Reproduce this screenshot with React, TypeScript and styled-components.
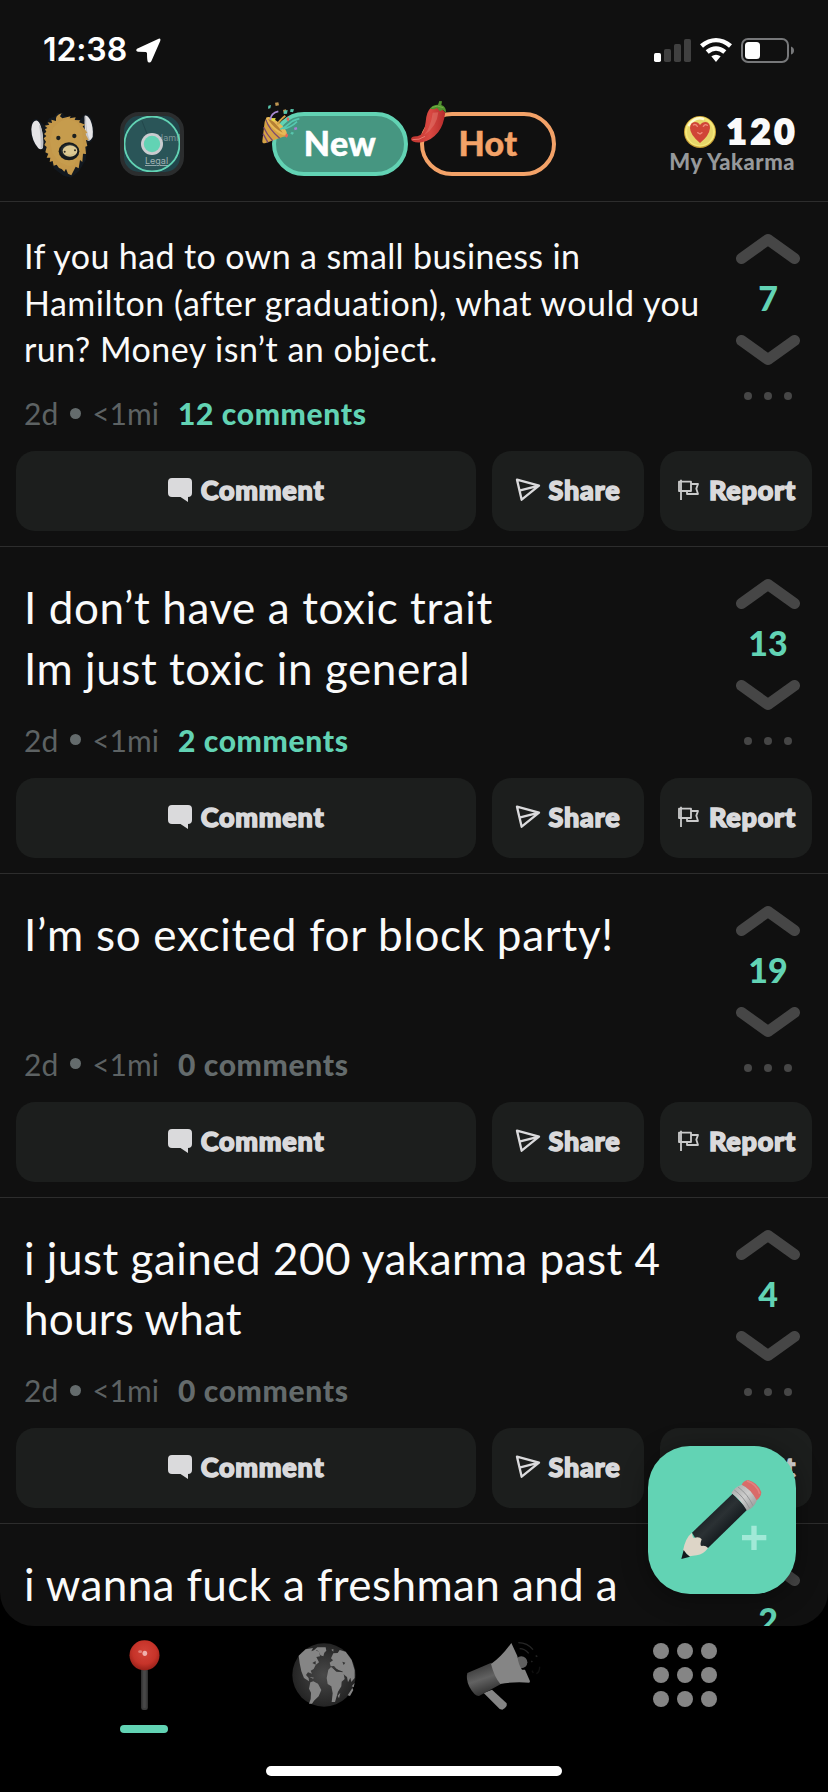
import React from "react";
import styled, { createGlobalStyle } from "styled-components";

const mint = "#62d3b4";
const ink = "#101010";

const GlobalStyle = createGlobalStyle`
  * { box-sizing: border-box; }
  body { margin: 0; background: #000; }
  svg { display: block; flex: none; overflow: visible; }
  button { font: inherit; border: 0; padding: 0; margin: 0; }
`;

const Screen = styled.div`
  width: 828px;
  height: 1792px;
  display: flex;
  flex-direction: column;
  overflow: hidden;
  background: #000;
  color: #fafafa;
  font-family: Lato, "Liberation Sans", sans-serif;
`;

const Page = styled.main`
  height: 1626px;
  flex: none;
  display: flex;
  flex-direction: column;
  overflow: hidden;
  background: ${ink};
  border-radius: 0 0 34px 34px;
  position: relative;
`;

const StatusBar = styled.div`
  height: 100px;
  flex: none;
  display: flex;
  justify-content: space-between;
  align-items: center;
  padding: 0 34px 0 43px;
`;

const StatusGroup = styled.div<{ $gap: number }>`
  display: flex;
  align-items: center;
  gap: ${(p) => p.$gap}px;
`;

const Clock = styled.span`
  font: 600 32px/40px Inter, sans-serif;
  letter-spacing: -0.1px;
  color: #fff;
`;

const Header = styled.header`
  height: 101px;
  flex: none;
  display: flex;
  align-items: flex-start;
  padding: 12px 33px 0 29px;
`;

const MapTile = styled.div`
  width: 64px;
  height: 64px;
  margin-left: 24px;
  border: 4px solid #2b2d2e;
  border-radius: 19px;
  overflow: hidden;
  background: #21454b;
`;

const Tabs = styled.nav`
  display: flex;
  gap: 12px;
  margin-left: 88px;
`;

const Tab = styled.button<{ $color: string; $fill: string; $text: string }>`
  position: relative;
  width: 136px;
  height: 64px;
  padding-bottom: 2px;
  border: 4px solid ${(p) => p.$color};
  border-radius: 32px;
  background: ${(p) => p.$fill};
  color: ${(p) => p.$text};
  font-size: 34px;
  font-weight: 900;
  line-height: 54px;
  letter-spacing: 0.4px;
  text-align: center;
  -webkit-text-stroke: 0.5px ${(p) => p.$text};
`;

const TabBadge = styled.span<{ $x: number; $y: number }>`
  position: absolute;
  left: ${(p) => p.$x}px;
  top: ${(p) => p.$y}px;
`;

const Karma = styled.div`
  margin-left: auto;
  display: flex;
  flex-direction: column;
  align-items: flex-end;
`;

const KarmaScore = styled.div`
  display: flex;
  align-items: center;
  gap: 11px;
  height: 40px;
  font-size: 34px;
  font-weight: 900;
  line-height: 38px;
  letter-spacing: 4.2px;
  -webkit-text-stroke: 2.2px #fafafa;
  span { margin-right: -3.5px; padding-bottom: 2px; }
`;

const KarmaLabel = styled.div`
  font-size: 22px;
  font-weight: 900;
  line-height: 20px;
  letter-spacing: 0.5px;
  color: #96999b;
`;

const PostBox = styled.article`
  flex: none;
  border-top: 1px solid #2d2d2d;
  padding-bottom: 15px;
`;

const PostBody = styled.div`
  display: flex;
  justify-content: space-between;
  min-height: 228px;
`;

const PostContent = styled.div<{ $small?: boolean }>`
  display: flex;
  flex-direction: column;
  justify-content: space-between;
  gap: ${(p) => (p.$small ? 22.5 : 23.5)}px;
  padding: ${(p) => (p.$small ? 31 : 30)}px 0 20px 24px;
`;

const PostText = styled.div<{ $small?: boolean }>`
  font-size: ${(p) => (p.$small ? 34 : 44)}px;
  line-height: ${(p) => (p.$small ? 46.5 : 60.5)}px;
  white-space: nowrap;
`;

const Line = styled.div<{ $track: number }>`
  letter-spacing: ${(p) => p.$track}px;
`;

const Meta = styled.div`
  display: flex;
  align-items: center;
  height: 36px;
  font-size: 30px;
  line-height: 36px;
  color: #5d6263;
  white-space: nowrap;
`;

const Dot = styled.i`
  width: 11px;
  height: 11px;
  margin: 0 11px 0 12px;
  border-radius: 50%;
  background: #646b6c;
`;

const CommentCount = styled.b<{ $active: boolean }>`
  margin-left: 19px;
  font-weight: 900;
  letter-spacing: 0.65px;
  color: ${(p) => (p.$active ? mint : "#646b6c")};
`;

const Votes = styled.div`
  width: 120px;
  flex: none;
  display: flex;
  flex-direction: column;
  align-items: center;
  padding-top: 32px;
`;

const VoteCount = styled.div`
  height: 71px;
  font-size: 34px;
  font-weight: 900;
  line-height: 67px;
  color: ${mint};
`;

const More = styled.div`
  display: flex;
  gap: 12px;
  margin-top: 27px;
  i { width: 8px; height: 8px; border-radius: 50%; background: #464646; }
`;

const Actions = styled.div`
  display: grid;
  grid-template-columns: 460px 152px 152px;
  gap: 16px;
  padding: 0 16px;
`;

const ActionButton = styled.button<{ $gap?: number; $shift?: number }>`
  height: 80px;
  display: flex;
  align-items: center;
  justify-content: center;
  gap: ${(p) => p.$gap ?? 9}px;
  padding-left: ${(p) => p.$shift ?? 0}px;
  padding-bottom: 2px;
  border-radius: 19px;
  background: #1c1e1d;
  color: #dadadc;
  font-size: 27px;
  font-weight: 900;
  line-height: 78px;
  letter-spacing: 0.75px;
  -webkit-text-stroke: 1.5px #dadadc;
`;

const Compose = styled.button`
  position: absolute;
  left: 648px;
  top: 1446px;
  width: 148px;
  height: 148px;
  border-radius: 42px;
  background: ${mint};
  box-shadow: 0 4px 26px rgba(0, 0, 0, 0.4);
  display: grid;
  place-items: center;
`;

const BottomNav = styled.nav`
  display: grid;
  grid-template-columns: repeat(4, 180px);
  padding: 14px 54px 0;
  height: 140px;
  flex: none;
`;

const NavItem = styled.div`
  display: flex;
  flex-direction: column;
  align-items: center;
  height: 93px;
`;

const ActiveMark = styled.div`
  width: 48px;
  height: 8px;
  margin-top: auto;
  border-radius: 4px;
  background: ${mint};
`;

const NavSlot = styled.div`
  padding-top: 3px;
`;

const HomeBar = styled.div`
  width: 296px;
  height: 10px;
  margin: 0 auto;
  border-radius: 5px;
  background: #fff;
`;

const LocationArrow = () => (
  <svg width="25" height="25" viewBox="407 112 75 75">
    <path d="M475 114Q482 112 480 120L453 182Q449 188 443 184Q440 182 440 157L437 154L413 153Q404 150 410 144Z" fill="#fff" />
  </svg>
);

const Signal = () => (
  <svg width="37" height="24" viewBox="0 0 37 24">
    <rect x="0" y="15" width="7" height="9" rx="1.7" fill="#fff" />
    <rect x="10" y="11" width="7" height="13" rx="1.7" fill="#404040" />
    <rect x="20" y="6" width="7" height="18" rx="1.7" fill="#404040" />
    <rect x="30" y="1" width="7" height="23" rx="1.7" fill="#404040" />
  </svg>
);

const Wifi = () => (
  <svg width="32" height="24" viewBox="875 111 96 72">
    <path d="M875 130Q923 92 971 130L962 140Q923 108 884 140ZM892 148Q923 124 954 148L945 158Q923 141 901 158ZM909 166Q923 156 937 166L923 183Z" fill="#fff" />
  </svg>
);

const Battery = () => (
  <svg width="53" height="25" viewBox="0 0 53 25">
    <rect x="1" y="1" width="46" height="23" rx="6" fill="none" stroke="#77787a" strokeWidth="2" />
    <rect x="4" y="4" width="15" height="17" rx="3.5" fill="#fff" />
    <path d="M50 8.5Q53 9.5 53 12.5Q53 15.5 50 16.5Z" fill="#77787a" />
  </svg>
);

const Yak = () => (
  <svg width="67" height="67" viewBox="28 53 201 201">
    <path d="M37 82Q44 68 57 78L76 95L88 72L105 67L112 56L130 56L133 64L155 67L180 77L193 62Q203 55 213 70Q224 90 222 124Q219 144 204 146L198 198L178 230L154 250L132 244L104 224L75 168Q52 166 43 147Q28 115 37 82Z" fill="#12181f" />
    <path d="M45 80Q57 73 64 98Q73 127 70 160Q65 169 56 162Q36 139 35 105Q36 86 45 80Z" fill="#e5e4e6" />
    <path d="M63 95Q73 125 70 160L63 164Q64 122 58 92Z" fill="#bfc0c5" />
    <path d="M195 64Q203 62 212 77Q222 100 219 128Q211 144 201 137Q193 115 195 64Z" fill="#e5e4e6" />
    <path d="M195 67L201 137L211 138Q200 117 199 66Z" fill="#c0c1c6" />
    <path d="M109 80Q105 64 126 57L121 66L128 72L153 66L150 72L168 69L165 77L182 78L178 84L197 91L189 96L203 115L197 118L207 137L199 137L203 155L197 157L199 179L190 178L188 203L181 197L177 222L168 217L155 243L145 238L139 223L134 232L126 224L118 221L111 211L102 214L99 200L90 203L92 190L81 190L86 178L77 174L81 158L74 152L79 142L72 132L80 125L73 119L80 112L76 105L83 101L75 94L89 91L84 84L97 86L95 76Z" fill="#c4984a" />
    <path d="M125 79L147 74L172 84L188 112L190 151L180 179L162 213L146 215L118 202L98 176L91 140L100 100Z" fill="#c89e50" opacity=".6" />
    <circle cx="116" cy="131" r="6.5" fill="#1c201f" />
    <circle cx="164" cy="125" r="6.5" fill="#1c201f" />
    <ellipse cx="148" cy="171" rx="31" ry="27" fill="#161b1d" />
    <ellipse cx="149" cy="168" rx="25" ry="19" fill="#283033" />
    <ellipse cx="151" cy="170" rx="22" ry="17" fill="#ddca94" />
    <circle cx="135" cy="172" r="3" fill="#342f24" />
    <circle cx="166" cy="168" r="3" fill="#342f24" />
    <path d="M138 181Q151 187 165 179" fill="none" stroke="#c9b477" strokeWidth="2" />
  </svg>
);

const MiniMap = () => (
  <svg width="56" height="56" viewBox="4 4 56 56">
    <circle cx="32" cy="32" r="27.5" fill="#2a5558" />
    <path d="M22 9L29 27" stroke="#23474c" strokeWidth="1" />
    <text x="36.5" y="28.5" fontSize="9" fontFamily="Inter, sans-serif" fill="#7d979a">Hamil</text>
    <text x="25" y="52" fontSize="9" fontFamily="Inter, sans-serif" fill="#a0b2b4" textDecoration="underline">Legal</text>
    <circle cx="32" cy="32" r="27.5" fill="none" stroke={mint} strokeWidth="1.8" />
    <circle cx="32" cy="32" r="11" fill="#cbccd0" />
    <circle cx="32" cy="32" r="8.2" fill={mint} />
  </svg>
);

const PartyPopper = () => (
  <svg width="40" height="43" viewBox="783 303 120 129">
    <path d="M800 352L861 403Q860 411 850 410L795 430Q786 431 787 423L794 365Z" fill="#d6a344" />
    <path d="M798 359Q806 387 839 415M791 382Q799 402 818 422M789 401L804 428" fill="none" stroke="#7a4a70" strokeWidth="4" />
    <path d="M799 354Q806 345 834 366Q861 387 861 404Q846 410 821 387Q798 366 799 354Z" fill="#e8b957" />
    <path d="M804 358Q818 356 848 398Q823 387 804 358" fill="#b57f34" />
    <path d="M811 360Q812 339 835 334" fill="none" stroke="#a88bd3" strokeWidth="5" />
    <path d="M832 374Q838 361 856 347" fill="none" stroke="#d4a346" strokeWidth="6" />
    <path d="M841 388Q860 379 869 370T898 356M849 386Q870 385 891 365" fill="none" stroke="#55c9b0" strokeWidth="5" />
    <path d="M816 355L827 354L824 364L814 361Z" fill="#e4de46" />
    <path d="M825 308L835 307L837 316L827 318ZM849 330L858 328L860 337L851 339Z" fill="#be9550" />
    <path d="M805 317L813 315L811 325L804 326ZM872 327L882 328L879 337L870 335ZM852 332L863 330L861 341L851 342ZM875 395L882 398L878 404L871 401Z" fill="#58c6ad" />
    <path d="M862 352L868 354L866 364L859 360ZM858 400L865 404L861 413L855 410Z" fill="#e66559" />
    <path d="M882 383L890 381L892 388L884 391Z" fill="#a781d5" />
  </svg>
);

const Chili = () => (
  <svg width="37" height="44" viewBox="6 300 111 132">
    <defs>
      <linearGradient id="chili" x1="0" x2="1">
        <stop offset="0" stopColor="#bd342f" />
        <stop offset=".55" stopColor="#da4942" />
        <stop offset="1" stopColor="#b42b2b" />
      </linearGradient>
    </defs>
    <path d="M68 324Q55 335 53 366Q49 405 28 409Q9 408 9 418Q10 429 41 427Q69 423 91 396Q107 376 112 337Q97 321 68 324Z" fill="url(#chili)" />
    <path d="M74 338Q68 383 48 406Q87 380 91 337Z" fill="#e27469" opacity=".55" />
    <path d="M13 419Q34 421 51 409" fill="none" stroke="#eb786e" strokeWidth="3" />
    <path d="M65 326Q75 314 90 314L94 303L102 304L100 315Q115 320 114 338L104 329L96 334L87 324L78 328Z" fill="#51922e" />
    <path d="M72 322Q88 314 106 323" fill="none" stroke="#75b246" strokeWidth="3" />
  </svg>
);

const Coin = () => (
  <svg width="32" height="32" viewBox="828 348 96 96">
    <circle cx="876" cy="396" r="48" fill="#c79e35" />
    <circle cx="876" cy="395" r="45" fill="#f4e878" />
    <circle cx="876" cy="397" r="39" fill="#e7d66a" />
    <path d="M841 378Q863 346 888 358" fill="none" stroke="#fffbd0" strokeWidth="7" />
    <path d="M876 429Q846 404 846 384Q847 366 861 366Q871 366 876 375Q882 366 893 366Q906 368 906 384Q904 407 876 429Z" fill="#d04537" />
    <path d="M856 375Q863 371 868 379M886 379Q891 371 898 376M869 398L876 402L882 398" fill="none" stroke="#ef8a79" strokeWidth="4" strokeLinecap="round" />
  </svg>
);

const Chevron = ({ down = false }: { down?: boolean }) => (
  <svg width="64" height="30" viewBox="0 0 64 30">
    <path d={down ? "M5.5 5.5L32 24.5L58.5 5.5" : "M5.5 24.5L32 5.5L58.5 24.5"} fill="none" stroke="#464646" strokeWidth="11" strokeLinecap="round" strokeLinejoin="round" />
  </svg>
);

const CommentIcon = () => (
  <svg width="24" height="24" viewBox="0 0 24 24">
    <path d="M4 0H20Q24 0 24 4V15Q24 19 20 19V24L12.5 19H4Q0 19 0 15V4Q0 0 4 0Z" fill="#dadadc" />
  </svg>
);

const ShareIcon = () => (
  <svg width="24" height="24" viewBox="321 838 72 72">
    <path d="M324 843L390 861L338 903ZM331 876L390 861" fill="none" stroke="#dadadc" strokeWidth="7" strokeLinejoin="round" />
  </svg>
);

const FlagIcon = () => (
  <svg width="21" height="22" viewBox="808 841 63 66">
    <path d="M817 843V904M811 849H847V877H811ZM847 856H868L863 870L868 886H835V877" fill="none" stroke="#c9caca" strokeWidth="5.5" strokeLinejoin="round" />
  </svg>
);

const Pencil = () => (
  <svg width="88" height="82" viewBox="240 234 264 246">
    <defs>
      <linearGradient id="shaft" x1="0" y1="0" x2="1" y2="1">
        <stop offset=".25" stopColor="#151b1f" />
        <stop offset=".47" stopColor="#2b3134" />
        <stop offset=".7" stopColor="#11171b" />
      </linearGradient>
      <linearGradient id="ferrule" x1="0" y1="0" x2="1" y2="1">
        <stop offset="0" stopColor="#a6a6a6" />
        <stop offset=".5" stopColor="#cdcdcd" />
        <stop offset="1" stopColor="#8b8b8b" />
      </linearGradient>
    </defs>
    <g transform="translate(4 -3)">
      <path d="M278 398L400 281L445 328L326 444L302 438Z" fill="url(#shaft)" />
      <path d="M278 398Q279 411 284 414Q300 408 307 418Q300 437 307 438Q318 435 326 444Q313 463 292 466L270 469L251 452Q258 413 278 398Z" fill="#ddd5c7" />
      <path d="M253 450L246 477L272 470Q262 465 253 450Z" fill="#13181c" />
      <path d="M396 279Q407 259 428 254Q455 265 473 301Q464 324 443 332Q424 299 396 279Z" fill="url(#ferrule)" />
      <path d="M405 270Q433 290 451 325M416 261Q445 282 461 317" fill="none" stroke="#949697" strokeWidth="3" />
      <path d="M427 254Q433 242 446 240Q475 247 486 277Q485 291 472 301Q454 266 427 254Z" fill="#d96b69" />
      <path d="M443 243Q472 252 481 281" fill="none" stroke="#e38280" strokeWidth="5" />
      <path d="M464 377V450M428 413H501" stroke="#a1e9d7" strokeWidth="16" />
    </g>
  </svg>
);

const Pin = () => (
  <svg width="31" height="70" viewBox="206 90 92 210">
    <defs>
      <radialGradient id="pin" cx=".5" cy=".4" r=".6">
        <stop offset="0" stopColor="#d3443a" />
        <stop offset=".65" stopColor="#c63329" />
        <stop offset="1" stopColor="#982019" />
      </radialGradient>
    </defs>
    <rect x="242" y="175" width="20" height="125" rx="7" fill="#3c3c3c" />
    <rect x="248" y="180" width="8" height="115" rx="4" fill="#484848" />
    <circle cx="252" cy="136" r="45" fill="url(#pin)" />
    <ellipse cx="253" cy="130" rx="7" ry="8" fill="#efb0ad" />
    <ellipse cx="239" cy="125" rx="6" ry="4" fill="#e28079" />
  </svg>
);

const Globe = () => (
  <svg width="64" height="64" viewBox="696 99 192 192">
    <defs>
      <radialGradient id="sea"><stop stopColor="#494949" /><stop offset="1" stopColor="#242424" /></radialGradient>
    </defs>
    <circle cx="792" cy="195" r="95" fill="url(#sea)" />
    <path d="M716 137L737 118L759 114L754 124L765 119L778 126L780 139L769 141L777 157L767 165L761 177L752 182L756 191L744 187L738 195L746 204L747 214L732 204L724 184L719 160ZM759 123L772 112L797 112L799 122L793 128L790 139L781 136L778 126L770 120ZM751 217L760 214L774 221L784 240L776 259L762 272L756 281L747 281L752 267L753 248L747 236ZM813 171L821 176L833 185L850 187L854 207L845 215L844 229L834 245L825 276L815 276L818 250L814 229L803 222L800 204L805 179ZM809 158L819 151L813 145L820 130L833 129L839 120L857 125L875 150L884 181L884 204L874 216L871 203L864 217L861 201L853 195L847 184L832 179L822 168L812 169Z" fill="#858585" />
    <path d="M757 159L767 153L767 164ZM847 155L856 158L851 165ZM817 173L832 178L841 184L829 185Z" fill="#343434" />
    <path d="M814 119L820 117V125ZM748 200L762 203L759 206ZM833 257L841 248L837 265ZM863 256L877 234L880 240L870 258ZM875 229L884 219L881 232Z" fill="#858585" />
  </svg>
);

const Megaphone = () => (
  <svg width="80" height="72" viewBox="72 90 240 216">
    <defs>
      <linearGradient id="barrel" x1=".25" y1="0" x2=".6" y2="1">
        <stop stopColor="#313131" /><stop offset=".5" stopColor="#626262" /><stop offset="1" stopColor="#292929" />
      </linearGradient>
    </defs>
    <path d="M131 249L156 239L200 280Q203 292 187 299L179 297Z" fill="#858585" />
    <path d="M82 189L154 158L183 222L117 258Q104 259 88 230Q77 207 82 189Z" fill="url(#barrel)" />
    <circle cx="244" cy="157" r="18" fill="#606060" />
    <path d="M214 99L232 138Q235 164 246 179H255L270 214L268 218Q215 215 181 222Q163 201 153 162Q184 141 214 99Z" fill="#858585" />
    <path d="M235 98Q262 98 279 119M239 116Q254 116 266 130M287 137L292 140M274 153L277 156" fill="none" stroke="#262626" strokeWidth="4" />
    <path d="M299 170Q299 186 289 191M276 182L280 189" fill="none" stroke="#101010" strokeWidth="4" />
  </svg>
);

const AppsGrid = () => (
  <svg width="64" height="64" viewBox="-1 0 64 64" fill="#858585">
    {[8, 32, 56].flatMap((y) => [8, 32, 56].map((x) => <circle key={`${x}-${y}`} cx={x} cy={y} r="8" />))}
  </svg>
);

type PostLine = { text: string; track: number };
type PostData = { lines: PostLine[]; votes: number; comments?: number; small?: boolean };

const posts: PostData[] = [
  {
    lines: [
      { text: "If you had to own a small business in", track: 0.38 },
      { text: "Hamilton (after graduation), what would you", track: 0.49 },
      { text: "run? Money isn’t an object.", track: 0.49 },
    ],
    votes: 7,
    comments: 12,
    small: true,
  },
  {
    lines: [
      { text: "I don’t have a toxic trait", track: 0.6 },
      { text: "Im just toxic in general", track: 0.56 },
    ],
    votes: 13,
    comments: 2,
  },
  { lines: [{ text: "I’m so excited for block party!", track: 0.7 }], votes: 19, comments: 0 },
  {
    lines: [
      { text: "i just gained 200 yakarma past 4", track: 0.5 },
      { text: "hours what", track: 0.2 },
    ],
    votes: 4,
    comments: 0,
  },
  { lines: [{ text: "i wanna fuck a freshman and a", track: 0.4 }], votes: 2 },
];

const Post = ({ post }: { post: PostData }) => {
  const { lines, votes, comments, small } = post;
  const loaded = comments !== undefined;
  return (
    <PostBox>
      <PostBody>
        <PostContent $small={small}>
          <PostText $small={small}>
            {lines.map(({ text, track }) => (
              <Line key={text} $track={track}>{text}</Line>
            ))}
          </PostText>
          {loaded && (
            <Meta>
              2d<Dot />&lt;1mi
              <CommentCount $active={comments > 0}>{comments} comments</CommentCount>
            </Meta>
          )}
        </PostContent>
        <Votes>
          <Chevron />
          <VoteCount>{votes}</VoteCount>
          <Chevron down />
          <More><i /><i /><i /></More>
        </Votes>
      </PostBody>
      {loaded && (
        <Actions>
          <ActionButton><CommentIcon />Comment</ActionButton>
          <ActionButton><ShareIcon />Share</ActionButton>
          <ActionButton $gap={10} $shift={2}><FlagIcon />Report</ActionButton>
        </Actions>
      )}
    </PostBox>
  );
};

export default function App() {
  return (
    <Screen>
      <GlobalStyle />
      <Page>
        <StatusBar>
          <StatusGroup $gap={9}><Clock>12:38</Clock><LocationArrow /></StatusGroup>
          <StatusGroup $gap={9}><Signal /><Wifi /><Battery /></StatusGroup>
        </StatusBar>
        <Header>
          <Yak />
          <MapTile><MiniMap /></MapTile>
          <Tabs>
            <Tab $color={mint} $fill="#469681" $text="#fff">
              New
              <TabBadge $x={-15} $y={-15}><PartyPopper /></TabBadge>
            </Tab>
            <Tab $color="#f3a268" $fill="transparent" $text="#f3a268">
              Hot
              <TabBadge $x={-14} $y={-16}><Chili /></TabBadge>
            </Tab>
          </Tabs>
          <Karma>
            <KarmaScore><Coin /><span>120</span></KarmaScore>
            <KarmaLabel>My Yakarma</KarmaLabel>
          </Karma>
        </Header>
        {posts.map((post) => <Post key={post.votes} post={post} />)}
        <Compose aria-label="New post"><Pencil /></Compose>
      </Page>
      <BottomNav>
        <NavItem><Pin /><ActiveMark /></NavItem>
        <NavItem><NavSlot><Globe /></NavSlot></NavItem>
        <NavItem><Megaphone /></NavItem>
        <NavItem><NavSlot><AppsGrid /></NavSlot></NavItem>
      </BottomNav>
      <HomeBar />
    </Screen>
  );
}
